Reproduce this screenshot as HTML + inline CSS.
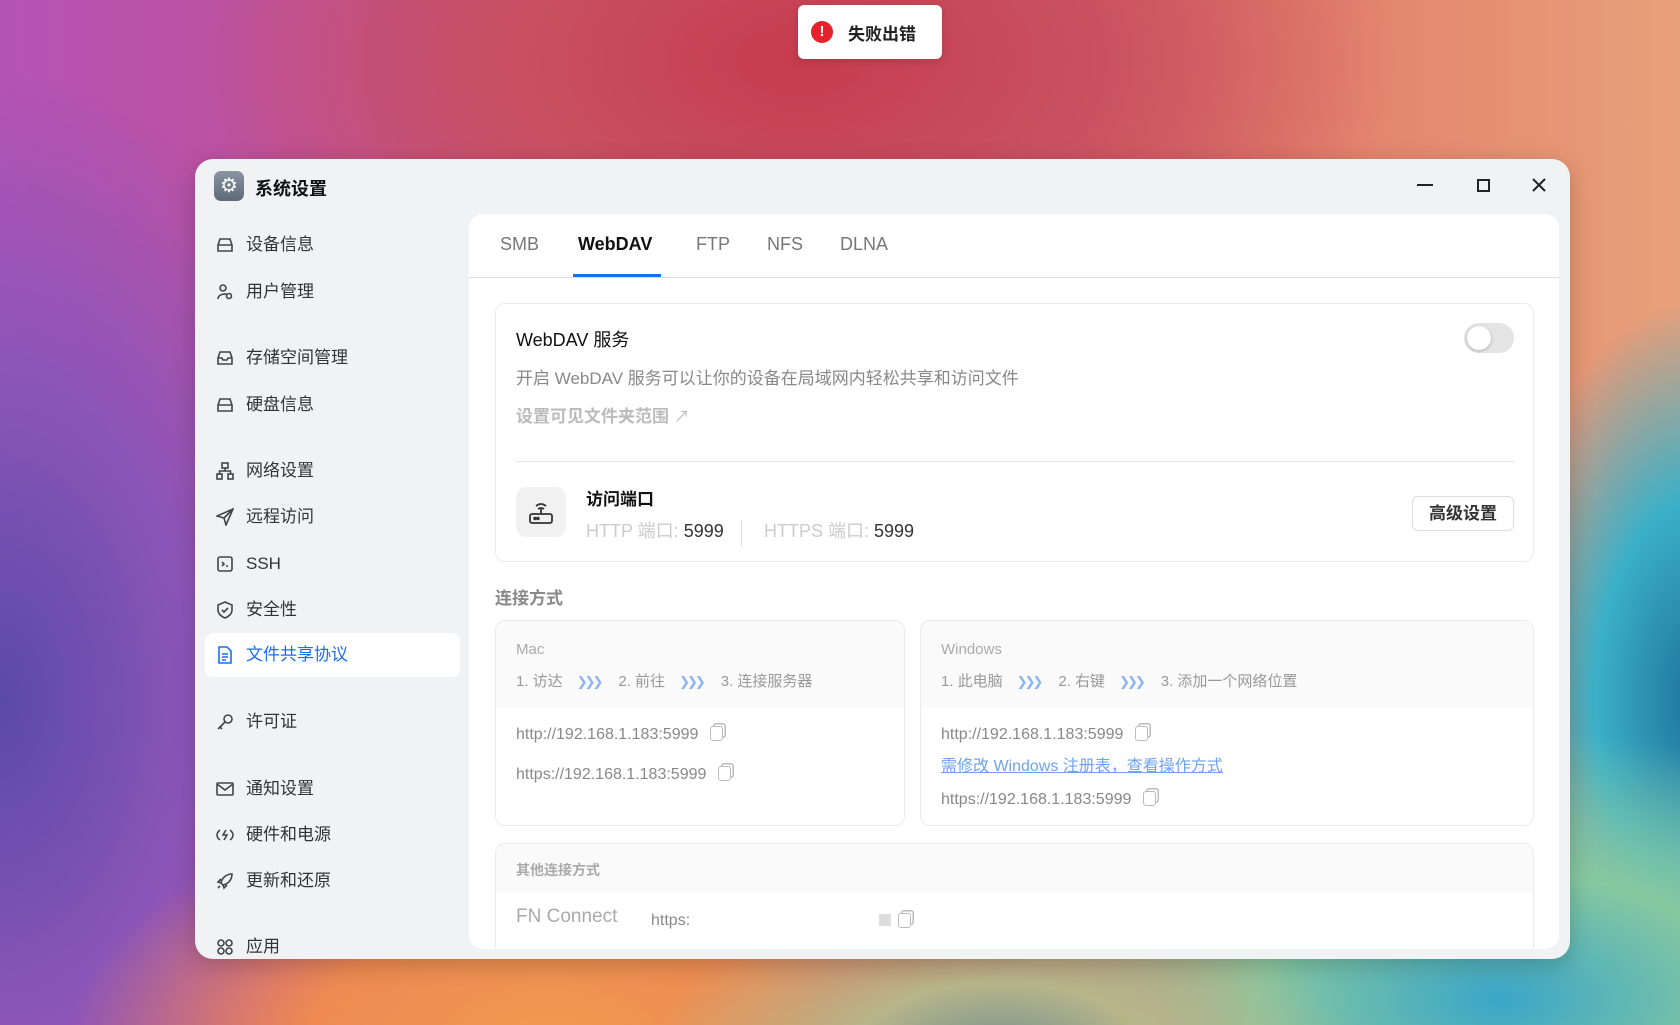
<!DOCTYPE html>
<html><head><meta charset="utf-8"><style>
*{box-sizing:border-box;margin:0;padding:0}
body{width:1680px;height:1025px;overflow:hidden;position:relative;font-family:"Liberation Sans","Noto Sans CJK SC",sans-serif;
background:
radial-gradient(ellipse 500px 260px at 1000px 1060px,#6f8e8e 0%,#b7b58a 30%,rgba(230,170,100,0) 70%),
radial-gradient(ellipse 700px 360px at 1500px 1000px,#3aa6c8 0%,#86c8a0 35%,rgba(220,200,120,0) 75%),
radial-gradient(ellipse 260px 500px at 1700px 700px,#1e6f9a 0%,#3ab0c8 40%,rgba(230,160,110,0) 80%),
radial-gradient(ellipse 600px 300px at 550px 1040px,#f09a50 0%,#ee8a52 40%,rgba(230,120,90,0) 80%),
radial-gradient(ellipse 420px 700px at 0px 700px,#5a4aa8 0%,#8a55b8 45%,rgba(180,80,170,0) 90%),
radial-gradient(ellipse 700px 400px at 800px 60px,#c63c4e 0%,#c85060 40%,rgba(200,90,100,0) 85%),
linear-gradient(90deg,#b553b5 0%,#c45088 30%,#d2585e 55%,#e27c6a 75%,#e8a07a 100%);}
.toast{position:absolute;left:798px;top:5px;width:144px;height:54px;background:#fff;border-radius:6px;box-shadow:0 2px 8px rgba(0,0,0,.15);display:flex;align-items:center;padding-left:13px;font-weight:bold;font-size:17px;color:#222}
.toast .ic{width:22px;height:22px;border-radius:50%;background:#e8222c;color:#fff;font-size:15px;text-align:center;line-height:22px;margin-right:15px}
.win{position:absolute;left:195px;top:159px;width:1375px;height:800px;background:#f1f2f4;border-radius:18px;overflow:hidden;box-shadow:0 6px 24px rgba(0,0,0,.2)}
.tico{position:absolute;left:19px;top:12px;width:30px;height:30px;border-radius:7px;background:linear-gradient(#8a95a3,#5f6a78);color:#fff;text-align:center;line-height:30px;font-size:20px}
.title{position:absolute;left:60px;top:16px;font-size:18px;font-weight:bold;color:#111}
.side div{position:absolute;left:10px;width:255px;height:44px;font-size:17px;color:#333;line-height:44px;padding-left:41px;border-radius:8px}
.side svg{position:absolute;left:11px;top:13px}
.side .act{background:#fff;color:#1a6ef0}
.main{position:absolute;left:274px;top:55px;width:1090px;height:735px;background:#fff;border-radius:14px;overflow:hidden}
.tab{position:absolute;top:20px;font-size:18px;color:#777}
.tabline{position:absolute;left:0;right:0;top:63px;height:1px;background:#ddd}
.card{position:absolute;border:1px solid #ebebeb;border-radius:10px;background:#fff;overflow:hidden}
.g{color:#999}
.t{position:absolute;white-space:nowrap}
.hd{position:absolute;left:0;right:0;top:0;background:#fafafa}
.arr{color:#8ab4f5;letter-spacing:-3px;margin:0 18px 0 14px;font-size:13px}
.cp{display:inline-block;width:13px;height:15px;border:1.5px solid #bbb;border-radius:3px;margin-left:12px;vertical-align:-2px;box-shadow:3px -3px 0 -1.5px #fff,3px -3px 0 0 #bbb}
</style></head><body>
<div class="toast"><span class="ic">!</span>失败出错</div>
<div class="win">
<div class="tico">⚙</div><div class="title">系统设置</div>
<div style="position:absolute;left:1222px;top:25px;width:16px;height:2px;background:#222"></div>
<div style="position:absolute;left:1282px;top:20px;width:13px;height:13px;border:2px solid #222"></div>
<svg style="position:absolute;left:1337px;top:19px" width="14" height="14" stroke="#222" stroke-width="2"><path d="M1 1L13 13M13 1L1 13"/></svg>
<div class="side">
<div style="top:64px"><svg width="18" height="18" fill="none" stroke="#444" stroke-width="1.6"><path d="M2 9 L4 3 H14 L16 9 V15 H2Z M2 9 H16"/></svg>设备信息</div>
<div style="top:111px"><svg width="18" height="18" fill="none" stroke="#444" stroke-width="1.6"><circle cx="7" cy="5" r="3"/><path d="M2 16 C2 11 10 10 11 12"/><circle cx="13" cy="13" r="2.5"/></svg>用户管理</div>
<div style="top:177px"><svg width="18" height="18" fill="none" stroke="#444" stroke-width="1.6"><path d="M2 9 L4 3 H14 L16 9 V15 H2Z M2 9 H6 L7 11 H11 L12 9 H16"/></svg>存储空间管理</div>
<div style="top:224px"><svg width="18" height="18" fill="none" stroke="#444" stroke-width="1.6"><path d="M2 9 L4 3 H14 L16 9 V15 H2Z M2 9 H16"/></svg>硬盘信息</div>
<div style="top:290px"><svg width="18" height="18" fill="none" stroke="#444" stroke-width="1.6"><rect x="6" y="1" width="6" height="5"/><rect x="1" y="12" width="5" height="5"/><rect x="12" y="12" width="5" height="5"/><path d="M9 6V9M3.5 12V9H14.5V12"/></svg>网络设置</div>
<div style="top:336px"><svg width="18" height="18" fill="none" stroke="#444" stroke-width="1.6"><path d="M17 1 L1 8 L8 10 L10 17Z M8 10 L17 1"/></svg>远程访问</div>
<div style="top:383px"><svg width="18" height="18" fill="none" stroke="#444" stroke-width="1.6"><rect x="2" y="2" width="14" height="14" rx="2"/><path d="M6 7 L8 9 L6 11 M10 11H12"/></svg>SSH</div>
<div style="top:429px"><svg width="18" height="18" fill="none" stroke="#444" stroke-width="1.6"><path d="M9 1 L16 4 V9 C16 13 12 16 9 17 C6 16 2 13 2 9 V4Z M6 9 L8 11 L12 7"/></svg>安全性</div>
<div class="act" style="top:474px"><svg width="18" height="18" fill="none" stroke="#1a6ef0" stroke-width="1.6"><path d="M3 1 H11 L15 5 V17 H3Z M6 8H12M6 11H12M6 14H10"/></svg>文件共享协议</div>
<div style="top:541px"><svg width="18" height="18" fill="none" stroke="#444" stroke-width="1.6"><circle cx="12" cy="6" r="4"/><path d="M9 9 L2 16 M4 14 L6 16"/></svg>许可证</div>
<div style="top:608px"><svg width="18" height="18" fill="none" stroke="#444" stroke-width="1.6"><rect x="1" y="3" width="16" height="12" rx="1"/><path d="M1 4 L9 10 L17 4"/></svg>通知设置</div>
<div style="top:654px"><svg width="18" height="18" fill="none" stroke="#444" stroke-width="1.6"><path d="M4 4 C0 7 0 11 4 14 M14 4 C18 7 18 11 14 14 M10 4 L7 9 H11 L8 14"/></svg>硬件和电源</div>
<div style="top:700px"><svg width="18" height="18" fill="none" stroke="#444" stroke-width="1.6"><path d="M16 2 C10 2 6 6 5 11 L7 13 C12 12 16 8 16 2Z M5 11 L2 10 L5 7 M7 13 L8 16 L11 13 M4 14 L2 16"/></svg>更新和还原</div>
<div style="top:766px"><svg width="18" height="18" fill="none" stroke="#444" stroke-width="1.6"><circle cx="5" cy="5" r="3"/><circle cx="13" cy="5" r="3"/><circle cx="5" cy="13" r="3"/><circle cx="13" cy="13" r="3"/></svg>应用</div>
</div>
<div class="main">
<div class="tab" style="left:31px">SMB</div>
<div class="tab" style="left:109px;color:#111;font-weight:bold">WebDAV</div>
<div class="tab" style="left:227px">FTP</div>
<div class="tab" style="left:298px">NFS</div>
<div class="tab" style="left:371px">DLNA</div>
<div style="position:absolute;left:104px;top:60px;width:88px;height:3px;background:#1a6ef0"></div>
<div class="tabline"></div>
<div class="card" style="left:26px;top:89px;width:1039px;height:259px">
<div class="t" style="left:20px;top:22px;font-size:18px;color:#111">WebDAV 服务</div>
<div class="t g" style="left:20px;top:60px;font-size:17px;color:#888">开启 WebDAV 服务可以让你的设备在局域网内轻松共享和访问文件</div>
<div class="t" style="left:20px;top:98px;font-size:17px;font-weight:bold;color:#bbb">设置可见文件夹范围 <span style="font-weight:normal;font-size:16px">↗</span></div>
<div style="position:absolute;left:968px;top:19px;width:50px;height:30px;border-radius:15px;background:#e4e4e4"><div style="position:absolute;left:3px;top:3px;width:24px;height:24px;border-radius:50%;background:#fff;box-shadow:0 1px 3px rgba(0,0,0,.25)"></div></div>
<div style="position:absolute;left:20px;top:157px;width:998px;height:1px;background:#e8e8e8"></div>
<div style="position:absolute;left:20px;top:183px;width:50px;height:50px;border-radius:10px;background:#f1f1f1"><svg width="50" height="50" fill="none" stroke="#333" stroke-width="1.8"><rect x="14" y="27" width="22" height="9" rx="2"/><path d="M25 27V22 M20 19 Q25 15 30 19 M22 22 Q25 20 28 22"/><circle cx="19" cy="31.5" r=".8" fill="#333"/><circle cx="22" cy="31.5" r=".8" fill="#333"/></svg></div>
<div class="t" style="left:90px;top:181px;font-size:17px;font-weight:bold;color:#111">访问端口</div>
<div class="t" style="left:90px;top:213px;font-size:18px;color:#ccc">HTTP 端口: <span style="color:#333">5999</span></div>
<div style="position:absolute;left:245px;top:216px;width:1px;height:26px;background:#e0e0e0"></div>
<div class="t" style="left:268px;top:213px;font-size:18px;color:#ccc">HTTPS 端口: <span style="color:#333">5999</span></div>
<div style="position:absolute;left:916px;top:192px;width:102px;height:35px;border:1px solid #ddd;border-radius:6px;text-align:center;line-height:33px;font-size:17px;font-weight:bold;color:#333">高级设置</div>
</div>
<div class="t" style="left:26px;top:370px;font-size:17px;font-weight:bold;color:#888">连接方式</div>
<div class="card" style="left:26px;top:406px;width:410px;height:206px">
<div class="hd" style="height:87px"></div>
<div class="t" style="left:20px;top:20px;font-size:15px;color:#aaa">Mac</div>
<div class="t" style="left:20px;top:49px;font-size:15px;color:#999">1. 访达<span class="arr">❯❯❯</span>2. 前往<span class="arr">❯❯❯</span>3. 连接服务器</div>
<div class="t" style="left:20px;top:105px;font-size:16px;color:#888">http://192.168.1.183:5999<span class="cp"></span></div>
<div class="t" style="left:20px;top:145px;font-size:16px;color:#888">https://192.168.1.183:5999<span class="cp"></span></div>
</div>
<div class="card" style="left:451px;top:406px;width:614px;height:206px">
<div class="hd" style="height:87px"></div>
<div class="t" style="left:20px;top:20px;font-size:15px;color:#aaa">Windows</div>
<div class="t" style="left:20px;top:49px;font-size:15px;color:#999">1. 此电脑<span class="arr">❯❯❯</span>2. 右键<span class="arr">❯❯❯</span>3. 添加一个网络位置</div>
<div class="t" style="left:20px;top:105px;font-size:16px;color:#888">http://192.168.1.183:5999<span class="cp"></span></div>
<div class="t" style="left:20px;top:131px;font-size:16px;color:#6fa2f0;text-decoration:underline">需修改 Windows 注册表，查看操作方式</div>
<div class="t" style="left:20px;top:170px;font-size:16px;color:#888">https://192.168.1.183:5999<span class="cp"></span></div>
</div>
<div class="card" style="left:26px;top:629px;width:1039px;height:140px">
<div class="hd" style="height:49px"></div>
<div class="t" style="left:20px;top:16px;font-size:14px;font-weight:bold;color:#aaa">其他连接方式</div>
<div class="t" style="left:20px;top:62px;font-size:19px;color:#aaa">FN Connect</div>
<div class="t" style="left:155px;top:68px;font-size:16px;color:#888">https:</div>
<div style="position:absolute;left:383px;top:70px;width:12px;height:12px;background:#ddd"></div>
<span class="cp" style="position:absolute;left:390px;top:69px"></span>
</div>
</div>
</div>
</body></html>
